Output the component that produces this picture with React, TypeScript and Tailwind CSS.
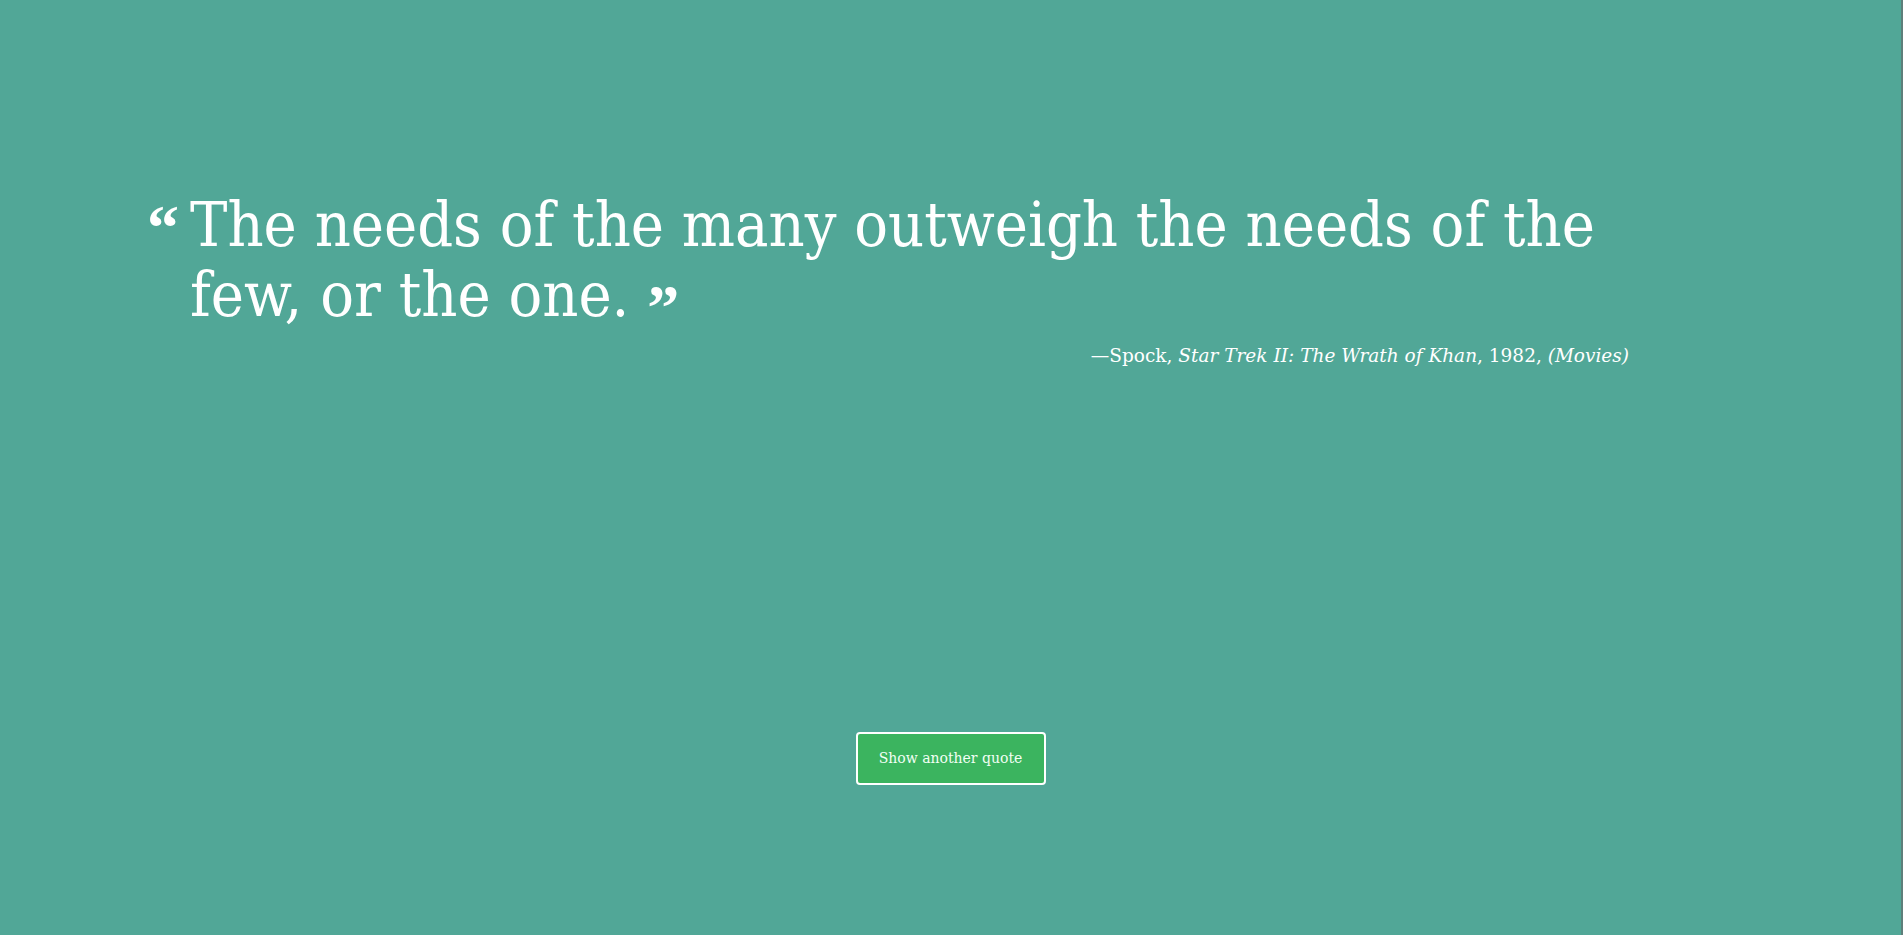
export default function App() {
  return (
    <div className="min-h-screen bg-[#51a797] border-r-2 border-[#5e7f7a] font-['DejaVu_Serif',serif] text-white">
      <div className="ml-[147px] w-[1482px] pt-[190px]">
        {/* quote */}
        <blockquote className="flex">
          <span className="w-[43px] shrink-0 font-['Liberation_Serif',serif] text-[64px] leading-[76px] font-bold">&ldquo;</span>
          <p className="w-[1420px] font-['DejaVu_Serif_Condensed','DejaVu_Serif',serif] font-stretch-condensed text-[62.4px] leading-[70px]">
            The needs of the many outweigh the needs of the few, or the one.{" "}
            <span className="relative top-[13px] font-['Liberation_Serif',serif] text-[64px] font-bold leading-none">&rdquo;</span>
          </p>
        </blockquote>

        {/* source */}
        <p className="mt-[12px] text-right text-[18.5px] leading-[28px]">
          &mdash;Spock, <i>Star Trek II: The Wrath of Khan</i>, 1982, <i>(Movies)</i>
        </p>
      </div>

      <div className="mt-[362px] flex justify-center">
        <button className="flex h-[53px] w-[190px] items-center justify-center rounded-[4px] border-2 border-white bg-[#3bb45f] text-[14px] text-[#f2fff4]">
          Show another quote
        </button>
      </div>
    </div>
  );
}
